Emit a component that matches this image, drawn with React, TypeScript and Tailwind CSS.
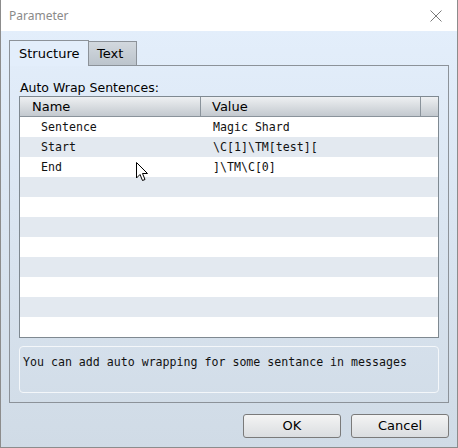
import React from 'react';

const ROWS: [string, string][] = [
    ['Sentence', 'Magic Shard'],
    ['Start', '\\C[1]\\TM[test]['],
    ['End', ']\\TM\\C[0]'],
];

const sans = "font-['DejaVu_Sans',sans-serif]";
const mono = "font-['DejaVu_Sans_Mono',monospace]";

export default function App() {
    // pad the list out to 11 lines like the real grid
    const lines = Array.from({ length: 11 }, (_, i) => ROWS[i] || ['', '']);

    return (
        <div className="relative w-[458px] h-[448px] flex flex-col border-x border-b border-[#8c8c8c] overflow-hidden">
            {/* title bar */}
            <div className="h-[31px] shrink-0 bg-white flex items-center justify-between pl-[8px] pr-[15px]">
                <span className="text-[12px] text-[#8a8a8a] font-['Noto_Sans',sans-serif]">Parameter</span>
                <svg width="12" height="12" viewBox="0 0 12 12">
                    <path d="M0.5 0.5 L11.5 11.5 M11.5 0.5 L0.5 11.5" stroke="#7a7a7a" strokeWidth="1" />
                </svg>
            </div>

            <div className="flex-1 flex flex-col bg-gradient-to-b from-[#e3eefb] to-[#d0dbe6] pl-[8px] pr-[8px] pt-[9px] pb-[9px]">
                {/* tabs */}
                <div className={`flex h-[25px] ${sans} text-[13px] text-black`}>
                    <div className="relative z-10 w-[80px] h-[26px] border border-b-0 border-[#8c9299] bg-[#e3eefb] flex items-center pl-[9px] pt-[1px]">
                        Structure
                    </div>
                    <div className="mt-[1px] w-[48px] h-[24px] border border-l-0 border-b-0 border-[#8c9299] bg-gradient-to-b from-[#d2d8de] to-[#bcc4cc] flex items-center pl-[8px] pt-[1px]">
                        Text
                    </div>
                </div>

                {/* panel */}
                <div className="w-[440px] h-[338px] border border-[#8c9299] flex flex-col px-[9px] pt-[13px]">
                    <div className={`${sans} text-[12.5px] leading-[17px] h-[17px] text-black pl-[1px]`}>Auto Wrap Sentences:</div>

                    <div className="border border-[#7f8991] bg-white flex flex-col">
                        <div className={`h-[20px] flex border-b border-[#8a939b] bg-gradient-to-b from-[#eef0f2] to-[#c3c9cf] ${sans} text-[13px] text-black`}>
                            <div className="w-[181px] border-r border-[#8a939b] pl-[12px] pt-[1px] flex items-center">Name</div>
                            <div className="w-[220px] border-r border-[#8a939b] pl-[11px] pt-[1px] flex items-center">Value</div>
                            <div className="flex-1" />
                        </div>
                        {lines.map(([name, value], i) => (
                            <div
                                key={i}
                                className={`h-[20px] flex items-center pt-[2px] ${mono} text-[11.6px] text-[#111] ${i % 2 ? 'bg-[#e3e9f0]' : 'bg-white'}`}
                            >
                                <div className="w-[181px] pl-[21px]">{name}</div>
                                <div className="pl-[12px] whitespace-pre">{value}</div>
                            </div>
                        ))}
                    </div>

                    <div className={`mt-[8px] h-[47px] rounded-[4px] border border-[#f4f7fa] pl-[3px] pt-[7px] ${mono} text-[11.6px] text-[#111]`}>
                        You can add auto wrapping for some sentance in messages
                    </div>
                </div>

                {/* buttons */}
                <div className={`mt-auto flex justify-end gap-[10px] ${sans} text-[13px] text-black`}>
                    <button className="w-[98px] h-[24px] rounded-[3px] border border-[#7a7a7a] bg-gradient-to-b from-[#f4f4f4] to-[#dadde0]">OK</button>
                    <button className="w-[98px] h-[24px] rounded-[3px] border border-[#7a7a7a] bg-gradient-to-b from-[#f4f4f4] to-[#dadde0]">Cancel</button>
                </div>
            </div>

            {/* mouse pointer sitting over the grid */}
            <svg className="absolute left-[135px] top-[162px]" width="13" height="20" viewBox="0 0 13 20">
                <path
                    d="M0.5 0.5 L0.5 16 L4 12.5 L6.5 18.5 L9 17.5 L6.5 11.5 L11.5 11.5 Z"
                    fill="white"
                    stroke="black"
                    strokeWidth="1"
                    strokeLinejoin="round"
                />
            </svg>
        </div>
    );
}
